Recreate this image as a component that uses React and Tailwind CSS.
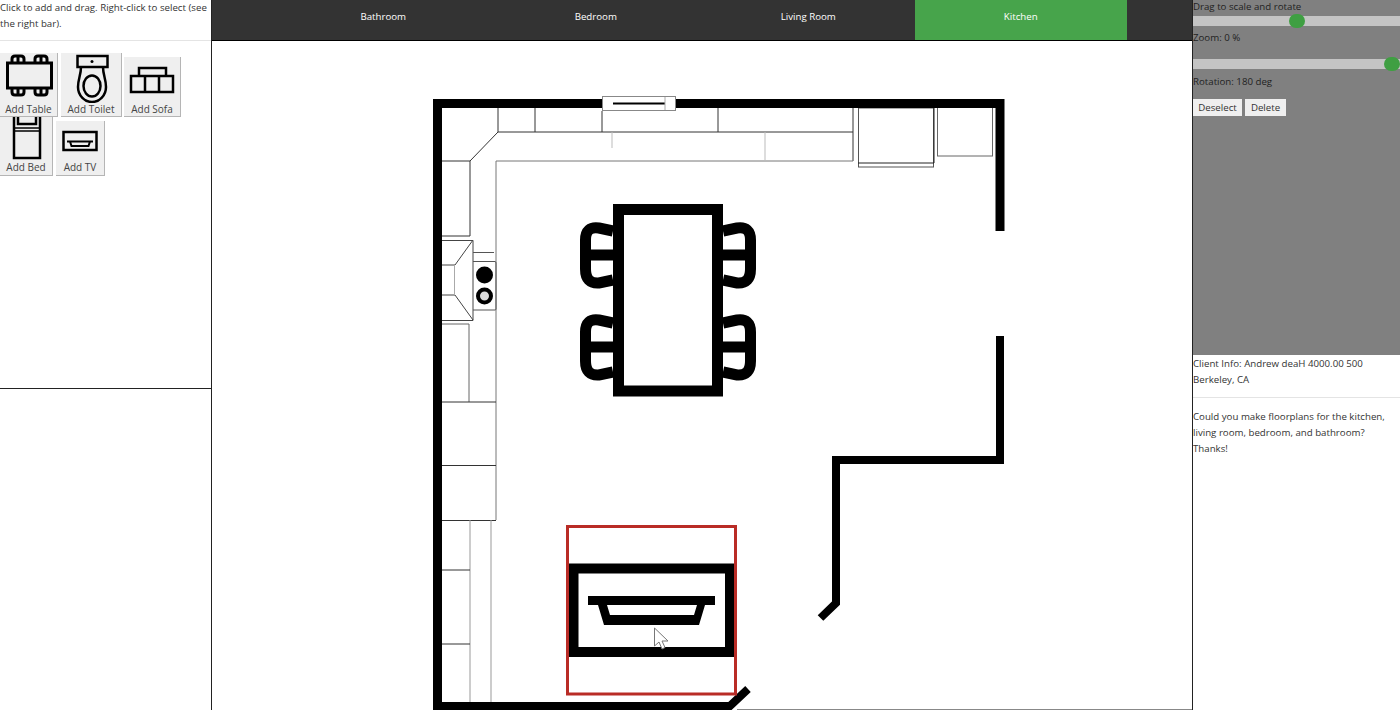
const TABS = ["Bathroom", "Bedroom", "Living Room", "Kitchen"];

const Line = ({ d, c = "#333", w = 1 }) => (
  <path d={d} fill="none" stroke={c} strokeWidth={w} />
);

const TableIcon = () => (
  <svg viewBox="0 0 58 50" className="w-[58px] h-[50px] shrink-0">
    <rect x="7.5" y="10" width="44" height="25" fill="none" stroke="#000" strokeWidth="3" />
    <path d="M12 10V6q0-3 3-3h6q3 0 3 3v4M18 3v7M35 10V6q0-3 3-3h6q3 0 3 3v4M41 3v7" fill="none" stroke="#000" strokeWidth="3" />
    <path d="M12 35v4q0 3 3 3h6q3 0 3-3v-4M18 35v7M35 35v4q0 3 3 3h6q3 0 3-3v-4M41 35v7" fill="none" stroke="#000" strokeWidth="3" />
  </svg>
);

const ToiletIcon = () => (
  <svg viewBox="0 0 60 50" className="w-[60px] h-[50px] shrink-0">
    <rect x="16.5" y="3" width="30" height="11" fill="none" stroke="#000" strokeWidth="2.5" />
    <circle cx="31" cy="8.5" r="1.5" fill="#000" />
    <path d="M20 14c0 8-3 12-3 20 0 9 7 15 14 15s14-6 14-15c0-8-3-12-3-20" fill="none" stroke="#000" strokeWidth="2.5" />
    <ellipse cx="31" cy="33" rx="8.5" ry="10.5" fill="none" stroke="#000" strokeWidth="2.5" />
  </svg>
);

const SofaIcon = () => (
  <svg viewBox="0 0 56 46" className="w-[56px] h-[46px] shrink-0">
    <rect x="15" y="11" width="27" height="14" fill="none" stroke="#000" strokeWidth="2.5" />
    <rect x="7" y="19" width="42" height="16" fill="#efefef" stroke="#000" strokeWidth="2.5" />
    <path d="M21 19v16M35 19v16" stroke="#000" strokeWidth="2.5" />
  </svg>
);

const BedIcon = () => (
  <svg viewBox="0 0 52 44" className="w-[52px] h-[44px] shrink-0">
    <rect x="14" y="-2" width="26" height="43" fill="none" stroke="#000" strokeWidth="2.5" />
    <rect x="18" y="-2" width="18" height="9" fill="none" stroke="#000" strokeWidth="2.5" />
    <path d="M14 11h26M14 14h26" stroke="#000" strokeWidth="1.5" />
  </svg>
);

const TvIcon = () => (
  <svg viewBox="0 0 48 40" className="w-[48px] h-[40px] shrink-0">
    <rect x="7.5" y="11" width="33" height="18" fill="none" stroke="#000" strokeWidth="2.5" />
    <path d="M11 20.5h26M14 20.5l1.5 4.5h17l1.5-4.5" fill="none" stroke="#000" strokeWidth="2" />
  </svg>
);

const AddButton = ({ label, width, icon, labelClass = "" }) => (
  <button
    className={`flex flex-col items-center shrink-0 bg-[#efefef] border-r border-b border-[#b5b5b5] text-[#444] text-[10px] leading-[13px] ${width}`}
  >
    {icon}
    <span className={labelClass}>{label}</span>
  </button>
);

const Chair = ({ y, flip }) => (
  <g transform={flip ? `translate(1336 0) scale(-1 1)` : undefined}>
    <path
      d={`M613 ${y - 24}L599 ${y - 27}Q585.5 ${y - 29} 585.5 ${y - 15}L585.5 ${y + 14}Q585.5 ${y + 29} 599 ${y + 28}L613 ${y + 25}M586 ${y}H613`}
      fill="none"
      stroke="#000"
      strokeWidth="11"
    />
  </g>
);

const FloorPlan = () => (
  <svg viewBox="212 41 980 669" className="w-full h-full block">
    {/* kitchen outline */}
    <Line d="M498 108V132M535 108V132M602 111V132M718 108V132M498 132H853M853 108V161M498 132L470 161M442 161H470M470 161V236M442 236H470" />
    <Line d="M612 132V148M765 132V160" c="#bbb" />
    <Line d="M496 161H853M496 161V520" c="#777" />
    <rect x="858.5" y="108" width="75" height="59" fill="none" stroke="#555" />
    <Line d="M858 163H934M934 108V163" c="#222" />
    <rect x="937.5" y="106" width="55" height="50" fill="none" stroke="#666" />
    {/* hood and stove */}
    <Line d="M442 240.5H473V320.5H442M473 240L455 265H442M473 320L455 295H442" c="#444" />
    <Line d="M454.5 265V295" c="#aaa" />
    <Line d="M473 252.5H494M473 261.5H495Q496 261.5 496 263V309Q496 310 495 310H473" c="#555" />
    <circle cx="484.5" cy="275" r="8.5" fill="#000" />
    <circle cx="484.5" cy="296" r="6.5" fill="#ddd" stroke="#000" strokeWidth="4" />
    <Line d="M442 324H469V402" c="#666" />
    <Line d="M442 402H496M442 465.5H496M442 520.5H496" c="#333" />
    <Line d="M470 520V702M491 520V702" c="#999" />
    <Line d="M442 570H470M442 644H470" c="#333" />
    {/* walls */}
    <path d="M437.5 702V103.5H1000V231" fill="none" stroke="#000" strokeWidth="9" />
    <path d="M1000 336V460H836V603L820.5 618" fill="none" stroke="#000" strokeWidth="8" />
    <path d="M433 706H730L748 689" fill="none" stroke="#000" strokeWidth="8" />
    <Line d="M737 709.5H1192" c="#888" />
    {/* window */}
    <rect x="602.5" y="96.5" width="73" height="14" fill="#fff" stroke="#888" />
    <Line d="M613 103.5H665" c="#000" w="2" />
    <Line d="M665 97V110" c="#aaa" />
    {/* table */}
    <rect x="618.5" y="209.5" width="99" height="181.5" fill="#fff" stroke="#000" strokeWidth="11" />
    <Chair y={255} />
    <Chair y={347} />
    <Chair y={255} flip />
    <Chair y={347} flip />
    {/* selected tv */}
    <rect x="573.5" y="568.5" width="156.5" height="83.5" fill="none" stroke="#000" strokeWidth="10" />
    <path
      d="M588 596H715V605H705L699 625H604L598 605H588ZM607 605L610 615H694L697 605Z"
      fillRule="evenodd"
      fill="#000"
    />
    <rect x="567.5" y="526.5" width="168" height="167.5" fill="none" stroke="#b92c26" strokeWidth="3" />
    {/* cursor */}
    <path
      d="M654.5 628V646L659 642L662 649L665 647.5L662 641L668 641Z"
      fill="#fff"
      stroke="#777"
    />
  </svg>
);

const Slider = ({ offset }) => (
  <div className="h-[10px] bg-[#c4c4c4] flex items-center overflow-visible">
    <div className={`w-[16px] h-[14px] shrink-0 rounded-full bg-[#3f9f42] ${offset}`} />
  </div>
);

export default function App() {
  return (
    <div className="flex w-[1400px] h-[710px] overflow-hidden bg-white text-[#333] text-[9.7px] leading-[16px] font-['Open_Sans',sans-serif]">
      <aside className="w-[212px] shrink-0 border-r border-[#222] flex flex-col">
        <div className="h-[389px] border-b border-[#222] overflow-hidden">
          <p className="h-[41px] border-b border-[#e4e4e4] whitespace-nowrap">
            Click to add and drag. Right-click to select (see
            <br />
            the right bar).
          </p>
          <div className="flex items-end pt-[11px] h-[76px]">
            <AddButton label="Add Table" width="w-[58px]" icon={<TableIcon />} />
            <AddButton label="Add Toilet" width="w-[61px] ml-[3px]" icon={<ToiletIcon />} />
            <AddButton label="Add Sofa" width="w-[57px] ml-[2px]" icon={<SofaIcon />} />
          </div>
          <div className="flex items-end">
            <AddButton label="Add Bed" width="w-[53px]" icon={<BedIcon />} labelClass="pb-[1px]" />
            <AddButton label="Add TV" width="w-[49px] ml-[3px]" icon={<TvIcon />} labelClass="pb-[1px]" />
          </div>
        </div>
      </aside>

      <main className="flex-1 flex flex-col min-w-0">
        <nav className="h-[41px] shrink-0 bg-[#333] border-b border-black flex justify-center">
          {TABS.map((tab) => (
            <div
              key={tab}
              className={`w-[212.5px] pb-[7px] flex items-center justify-center text-white ${tab === "Kitchen" ? "bg-[#47a44b]" : ""}`}
            >
              {tab}
            </div>
          ))}
        </nav>
        <div className="flex-1 min-h-0">
          <FloorPlan />
        </div>
      </main>

      <aside className="w-[208px] shrink-0 border-l border-[#222] flex flex-col">
        <div className="h-[355px] bg-[#808080] text-[#222]">
          <p className="h-[16px] -mt-[1px] mb-[1px]">Drag to scale and rotate</p>
          <Slider offset="ml-[96px]" />
          <p className="mt-[4px] h-[29px]">Zoom: 0 %</p>
          <Slider offset="ml-[191px]" />
          <p className="mt-[5px]">Rotation: 180 deg</p>
          <div className="flex gap-[3px] mt-[9px]">
            <button className="w-[49px] h-[17px] bg-[#efefef] text-[#333]">Deselect</button>
            <button className="w-[41px] h-[17px] bg-[#efefef] text-[#333]">Delete</button>
          </div>
        </div>
        <div className="border-b border-[#e4e4e4] h-[43px] pt-[1px]">
          <p className="whitespace-nowrap">Client Info: Andrew deaH 4000.00 500</p>
          <p>Berkeley, CA</p>
        </div>
        <p className="mt-[11px]">
          Could you make floorplans for the kitchen,
          <br />
          living room, bedroom, and bathroom?
          <br />
          Thanks!
        </p>
      </aside>
    </div>
  );
}
